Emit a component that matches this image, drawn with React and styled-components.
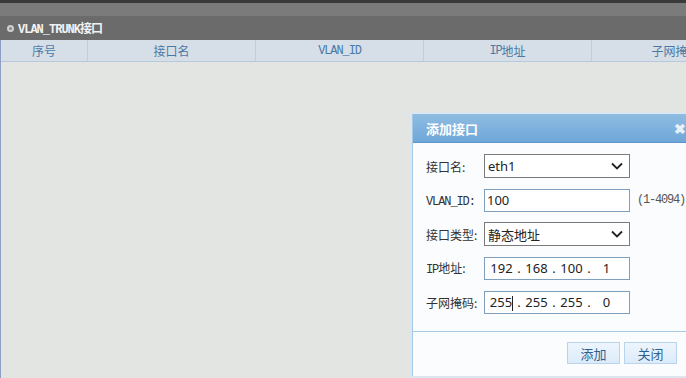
import React from 'react';
import styled, {createGlobalStyle} from 'styled-components';

const Global = createGlobalStyle`
html, body {
  margin: 0;
  padding: 0;
  background: #e3e5e3;
  overflow: hidden;
}
`

const CJK = `"Noto Sans CJK SC", "Noto Sans", sans-serif`
const MONO = `"Liberation Mono", "Noto Sans CJK SC", monospace`
const UI = `"Noto Sans", "Noto Sans CJK SC", sans-serif`

const Page = styled.div`
position: relative;
width: 686px;
height: 378px;
overflow: hidden;
display: flex;
flex-direction: column;
background: #e3e5e3;
`

const TopEdge = styled.div`
height: 3px;
background: #3a3a3a;
flex-shrink: 0;
`

const TopBand = styled.div`
height: 13px;
background: #7b7b7b;
flex-shrink: 0;
`

const Frame = styled.div`
flex: 1;
display: flex;
`

const LeftStrip = styled.div`
width: 2px;
background: #7a7a7a;
border-right: 1px solid #8d9fc4;
`

const Main = styled.div`
flex: 1;
display: flex;
flex-direction: column;
`

const TitleBar = styled.div`
height: 24px;
background: #6b6b6b;
display: flex;
align-items: center;
gap: 4px;
padding-left: 7px;
margin-left: -1px;
color: #f2f2f2;
font-family: ${MONO};
font-weight: bold;
font-size: 12px;
letter-spacing: -1px;
`

const Ring = styled.span`
width: 3px;
height: 3px;
border-radius: 50%;
border: 2px solid #cfcfcf;
background: #8a8a8a;
`

const HeaderRow = styled.div`
display: grid;
grid-template-columns: 86px 168px 168px 168px 168px;
height: 21px;
background: #d6dfe7;
border-bottom: 1px solid #b9c9dc;
`

const HeadCell = styled.div`
display: flex;
align-items: center;
justify-content: center;
border-left: ${p => p.first ? 'none' : '1px solid #c1cedb'};
color: #4b79a6;
font-family: ${CJK};
font-size: 12px;
white-space: nowrap;
overflow: hidden;
`

const Latin = styled.span`
font-family: ${MONO};
font-size: 12px;
letter-spacing: -1.1px;
`

const Dialog = styled.div`
position: absolute;
left: 410px;
top: 112px;
width: 288px;
border: 2px solid #dbe6ef;
border-right: none;
background: #dbe6ef;
`

const DialogInner = styled.div`
border-left: 1px solid #a7c8e5;
background: #fafcfd;
`

const DialogTitle = styled.div`
height: 28px;
background: linear-gradient(#8fbde2, #6fa7d8);
border-bottom: 1px solid #5c95c9;
display: flex;
align-items: center;
justify-content: space-between;
padding: 0 0 0 13px;
color: #fff;
font-family: ${CJK};
font-weight: bold;
font-size: 13px;
`

const Close = styled.span`
color: #e8f0f8;
font-family: ${UI};
font-size: 14px;
font-weight: bold;
margin-right: 14px;
`

const Form = styled.div`
display: grid;
grid-template-columns: 58px 146px auto;
grid-auto-rows: 24px;
row-gap: 10px;
padding: 11px 0 17px 13px;
align-items: center;
border-bottom: 1px solid #a9c9e3;
`

const Label = styled.div`
font-family: ${CJK};
font-size: 12px;
color: #333;
white-space: nowrap;
`

const SelectBox = styled.div`
height: 22px;
border: 1px solid #7a7a7a;
background: #fff;
display: flex;
align-items: center;
justify-content: space-between;
padding: 0 6px 0 3px;
font-family: ${UI};
font-size: 13px;
color: #222;
`

const TextBox = styled.div`
height: 21px;
border: 1px solid #7f9fbf;
background: #fff;
display: flex;
align-items: center;
padding: 0 2px;
font-family: ${UI};
font-size: 13px;
color: #222;
`

const IpBox = styled(TextBox)`
padding: 0 1px 0 3px;
display: grid;
grid-template-columns: repeat(4, 1fr);
`

const Seg = styled.div`
display: flex;
align-items: center;
`

const Num = styled.span`
flex: 1;
text-align: center;
`

const Dot = styled.span`
width: 8px;
text-align: center;
`

const Caret = styled.span`
display: inline-block;
width: 1px;
height: 15px;
background: #222;
vertical-align: middle;
`

const Hint = styled.div`
font-family: ${MONO};
font-size: 12px;
letter-spacing: -1.2px;
color: #555;
padding-left: 7px;
white-space: nowrap;
`

const Footer = styled.div`
display: flex;
gap: 4px;
padding: 10px 0 12px 154px;
`

const Button = styled.div`
width: 51px;
height: 20px;
border: 1px solid #b9d4ec;
background: linear-gradient(#edf5fd, #dcebfa);
display: flex;
align-items: center;
justify-content: center;
font-family: ${CJK};
font-size: 13px;
color: #2f5f8f;
`

const Chevron = () => (
    <svg width="12" height="8" viewBox="0 0 12 8">
        <path d="M1 1.5 L6 6.5 L11 1.5" fill="none" stroke="#222" strokeWidth="1.8"/>
    </svg>
)

const IpField = ({parts, caret}) => (
    <IpBox>
        {parts.map((p, i) =>
            <Seg key={i}>
                <Num>{p}{caret && i === 0 ? <Caret/> : null}</Num>
                <Dot>{i < 3 ? '.' : ''}</Dot>
            </Seg>
        )}
    </IpBox>
)

const App = () => {
    return (
        <Page>
            <Global/>
            <TopEdge/>
            <TopBand/>
            <Frame>
                <LeftStrip/>
                <Main>
                    <TitleBar><Ring/>VLAN_TRUNK接口</TitleBar>
                    <HeaderRow>
                        <HeadCell first>序号</HeadCell>
                        <HeadCell>接口名</HeadCell>
                        <HeadCell><Latin>VLAN_ID</Latin></HeadCell>
                        <HeadCell><Latin>IP</Latin>地址</HeadCell>
                        <HeadCell>子网掩码</HeadCell>
                    </HeaderRow>
                </Main>
            </Frame>
            <Dialog>
                <DialogInner>
                    <DialogTitle>添加接口<Close>✖</Close></DialogTitle>
                    <Form>
                        <Label>接口名:</Label>
                        <SelectBox>eth1<Chevron/></SelectBox>
                        <div/>
                        <Label><Latin>VLAN_ID:</Latin></Label>
                        <TextBox>100</TextBox>
                        <Hint>(1-4094)</Hint>
                        <Label>接口类型:</Label>
                        <SelectBox>静态地址<Chevron/></SelectBox>
                        <div/>
                        <Label><Latin>IP</Latin>地址:</Label>
                        <IpField parts={['192', '168', '100', '1']}/>
                        <div/>
                        <Label>子网掩码:</Label>
                        <IpField parts={['255', '255', '255', '0']} caret/>
                        <div/>
                    </Form>
                    <Footer>
                        <Button>添加</Button>
                        <Button>关闭</Button>
                    </Footer>
                </DialogInner>
            </Dialog>
        </Page>
    );
};

export default App;
